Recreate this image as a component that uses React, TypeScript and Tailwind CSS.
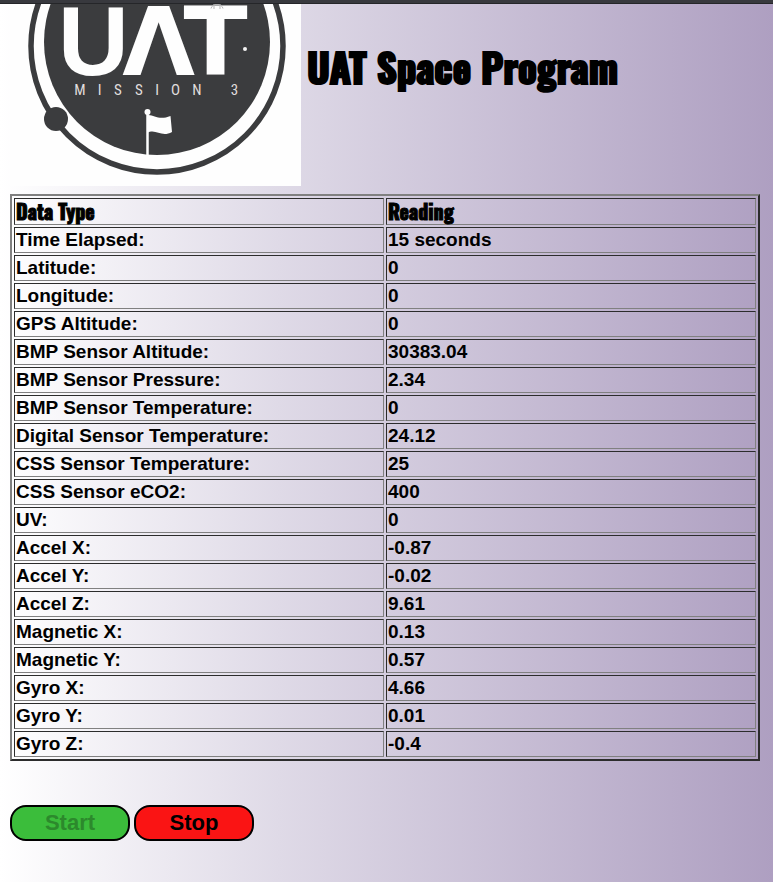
const readings: [string, string][] = [
  ["Time Elapsed:", "15 seconds"],
  ["Latitude:", "0"],
  ["Longitude:", "0"],
  ["GPS Altitude:", "0"],
  ["BMP Sensor Altitude:", "30383.04"],
  ["BMP Sensor Pressure:", "2.34"],
  ["BMP Sensor Temperature:", "0"],
  ["Digital Sensor Temperature:", "24.12"],
  ["CSS Sensor Temperature:", "25"],
  ["CSS Sensor eCO2:", "400"],
  ["UV:", "0"],
  ["Accel X:", "-0.87"],
  ["Accel Y:", "-0.02"],
  ["Accel Z:", "9.61"],
  ["Magnetic X:", "0.13"],
  ["Magnetic Y:", "0.57"],
  ["Gyro X:", "4.66"],
  ["Gyro Y:", "0.01"],
  ["Gyro Z:", "-0.4"],
];

const cell =
  "border border-t-[#2c2c2c] border-l-[#2c2c2c] border-r-[#808080] border-b-[#808080] p-px";

function MissionLogo() {
  return (
    <svg
      className="block shrink-0 bg-[#fefefe]"
      width="291"
      height="182"
      viewBox="10 4 291 182"
      role="img"
      aria-label="UAT Mission 3"
    >
      <circle cx="157" cy="46" r="126" fill="none" stroke="#3b3c3e" strokeWidth="5.5" />
      <circle cx="157" cy="42" r="113" fill="#3b3c3e" />
      <circle cx="56" cy="119" r="12" fill="#3b3c3e" />
      <g fill="#fefefe" textAnchor="middle" fontWeight="700">
        <text x="93.5" y="75" fontSize="98" fontFamily="'Liberation Sans', Arial, sans-serif">U</text>
        <text x="158.5" y="75" fontSize="94" fontFamily="'DejaVu Sans', sans-serif">Λ</text>
        <text x="215.5" y="75" fontSize="94" fontFamily="'DejaVu Sans', sans-serif">T</text>
      </g>
      <path d="M211 8.500C212 3 222 3 223 8.500M214 4V9M220 4V9" fill="none" stroke="#b5b5b6" strokeWidth="1" />
      <circle cx="245" cy="49" r="2" fill="#f4f4f4" />
      <text
        x="80 99.5 118 139 157 175.500 197 234.500"
        y="95"
        textAnchor="middle"
        fontSize="15"
        fontFamily="'Roboto Condensed', 'Arial Narrow', sans-serif"
        fill="#e0dedd"
      >
        MISSION3
      </text>
      <circle cx="147.500" cy="112" r="3" fill="#fefefe" />
      <path d="M147.500 112V156" stroke="#fefefe" strokeWidth="2.500" />
      <path d="M147 115C154 114 158 121 170.500 116L172 132C161 138 156 128 147 133Z" fill="#fefefe" />
    </svg>
  );
}

export default function App() {
  return (
    <div className="min-h-screen bg-linear-to-r from-white via-[#dfdae7] via-36% to-[#ae9fc1] font-['Liberation_Sans',Arial,sans-serif] text-black">
      <div className="h-1 border-b border-[#252629] bg-[#38393e]" />
      <main className="pr-[13px] pb-10 pl-[10px]">
        <header className="flex items-start gap-[6px]">
          <MissionLogo />
          <h1 className="mt-9 font-[Impact,Oswald,sans-serif] text-[39px] leading-[52px] font-bold whitespace-nowrap [-webkit-text-stroke:2px_black]">
            UAT Space Program
          </h1>
        </header>

        <table className="mt-2 w-full table-fixed border-separate border-spacing-[2px] border-2 border-t-[#808080] border-r-[#2c2c2c] border-b-[#2c2c2c] border-l-[#808080] text-left text-[19px] leading-[22px] font-bold">
          <thead>
            <tr className="font-[Impact,Oswald,sans-serif] text-[20px] leading-[23px] [-webkit-text-stroke:1px_black]">
              <th scope="col" className={cell}>Data Type</th>
              <th scope="col" className={cell}>Reading</th>
            </tr>
          </thead>
          <tbody>
            {readings.map(([name, value]) => (
              <tr key={name}>
                <th scope="row" className={cell}>{name}</th>
                <td className={cell}>{value}</td>
              </tr>
            ))}
          </tbody>
        </table>

        <div className="mt-11 flex gap-1 text-[22px] leading-6 font-bold">
          <button
            type="button"
            disabled
            className="h-9 w-[120px] rounded-2xl border-2 border-black bg-[#3bbd3b] text-[#2c892c]"
          >
            Start
          </button>
          <button
            type="button"
            className="h-9 w-[120px] cursor-pointer rounded-2xl border-2 border-black bg-[#fa1414] text-black"
          >
            Stop
          </button>
        </div>
      </main>
    </div>
  );
}
